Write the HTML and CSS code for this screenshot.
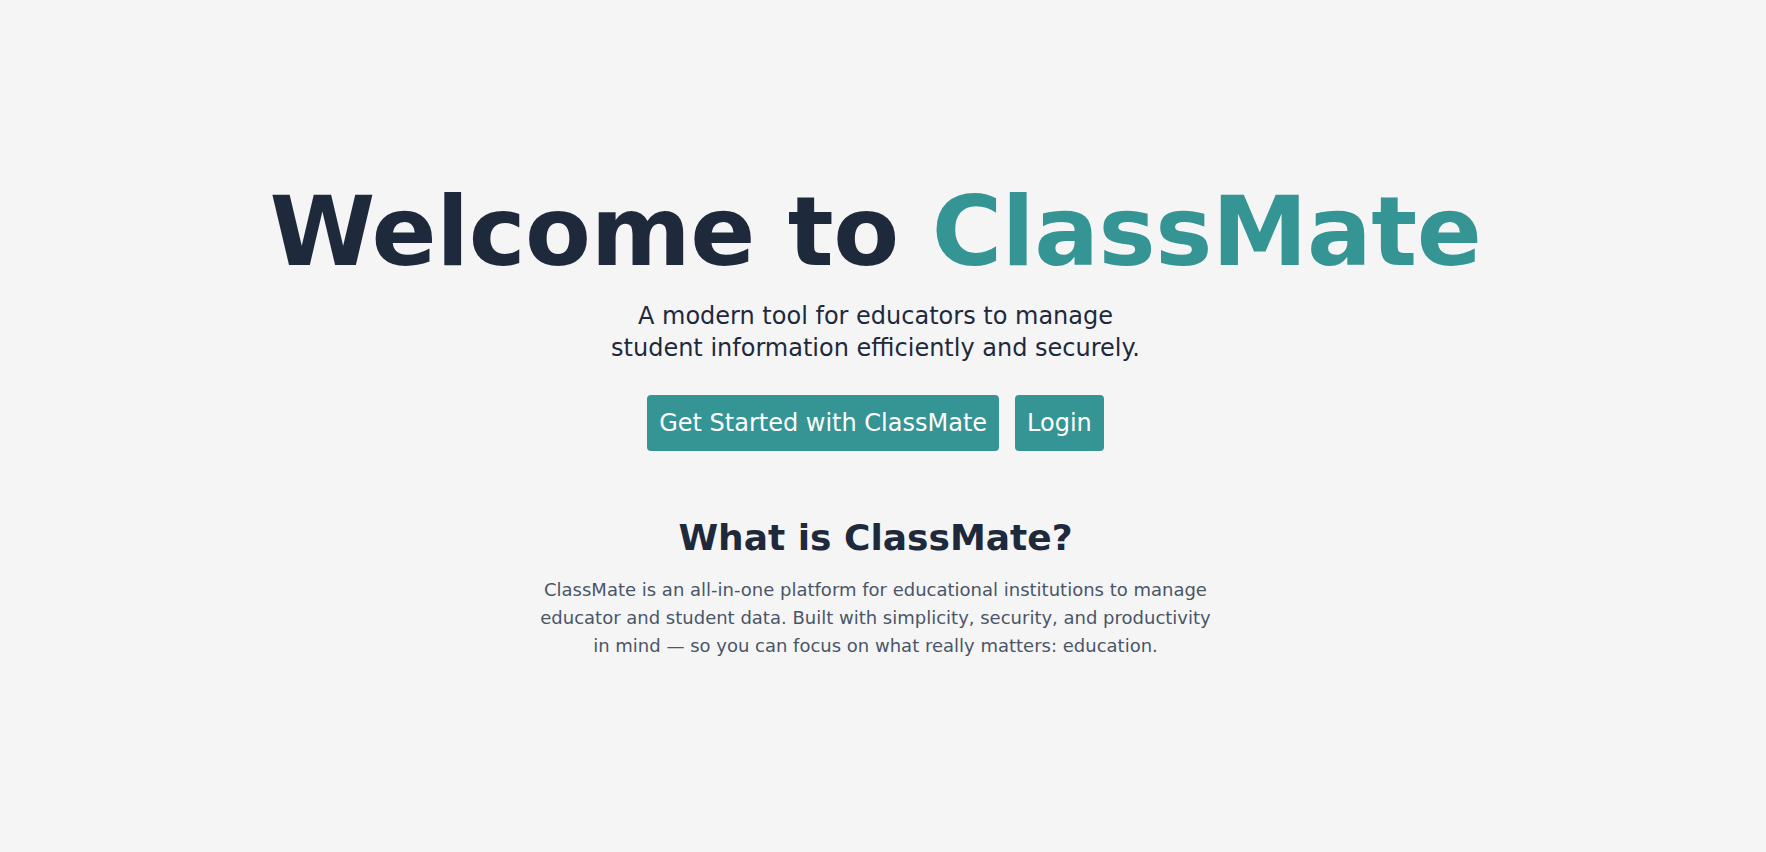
FILE: index.html
```html
<!DOCTYPE html>
<html lang="en">
<head>
<meta charset="utf-8">
<title>ClassMate</title>
<link rel="stylesheet" href="styles.css">
</head>
<body>
<main class="hero">
  <div class="hero-inner">
    <h1 class="title">Welcome to <span class="brand">ClassMate</span></h1>
    <p class="subtitle">A modern tool for educators to manage student information efficiently and securely.</p>
    <div class="actions">
      <a class="btn" href="#">Get Started with ClassMate</a>
      <a class="btn" href="#">Login</a>
    </div>
    <section class="about">
      <h2 class="about-title">What is ClassMate?</h2>
      <p class="about-text">ClassMate is an all-in-one platform for educational institutions to manage educator and student data. Built with simplicity, security, and productivity in mind — so you can focus on what really matters: education.</p>
    </section>
  </div>
</main>
</body>
</html>
```

FILE: styles.css
```css
* { box-sizing: border-box; }
html, body { margin: 0; padding: 0; }
body {
  background: #f5f5f5;
  font-family: "DejaVu Sans", Verdana, sans-serif;
  color: #1e293b;
}
.hero {
  min-height: 100vh;
  display: flex;
  align-items: center;
  justify-content: center;
  padding: 0 15px 8px 0;
}
.hero-inner {
  display: flex;
  flex-direction: column;
  align-items: center;
  text-align: center;
}
.title {
  margin: 0 0 20px;
  font-size: 96px;
  line-height: 96px;
  font-weight: 700;
  letter-spacing: -0.45px;
  color: #1e293b;
}
.brand { color: #359594; }
.subtitle {
  margin: 0 0 31px;
  max-width: 560px;
  font-size: 24px;
  line-height: 32px;
  color: #1e293b;
}
.actions {
  display: flex;
  gap: 16px;
}
.btn {
  display: block;
  padding: 12px;
  font-size: 24px;
  line-height: 32px;
  color: #ffffff;
  background: #359594;
  border-radius: 4px;
  text-decoration: none;
}
.about {
  margin-top: 67px;
  max-width: 672px;
  display: flex;
  flex-direction: column;
  align-items: center;
}
.about-title {
  margin: 0 0 18px;
  font-size: 36px;
  line-height: 40px;
  font-weight: 700;
  color: #1e293b;
}
.about-text {
  margin: 0;
  font-size: 18px;
  line-height: 28px;
  color: #4a5568;
}
```
